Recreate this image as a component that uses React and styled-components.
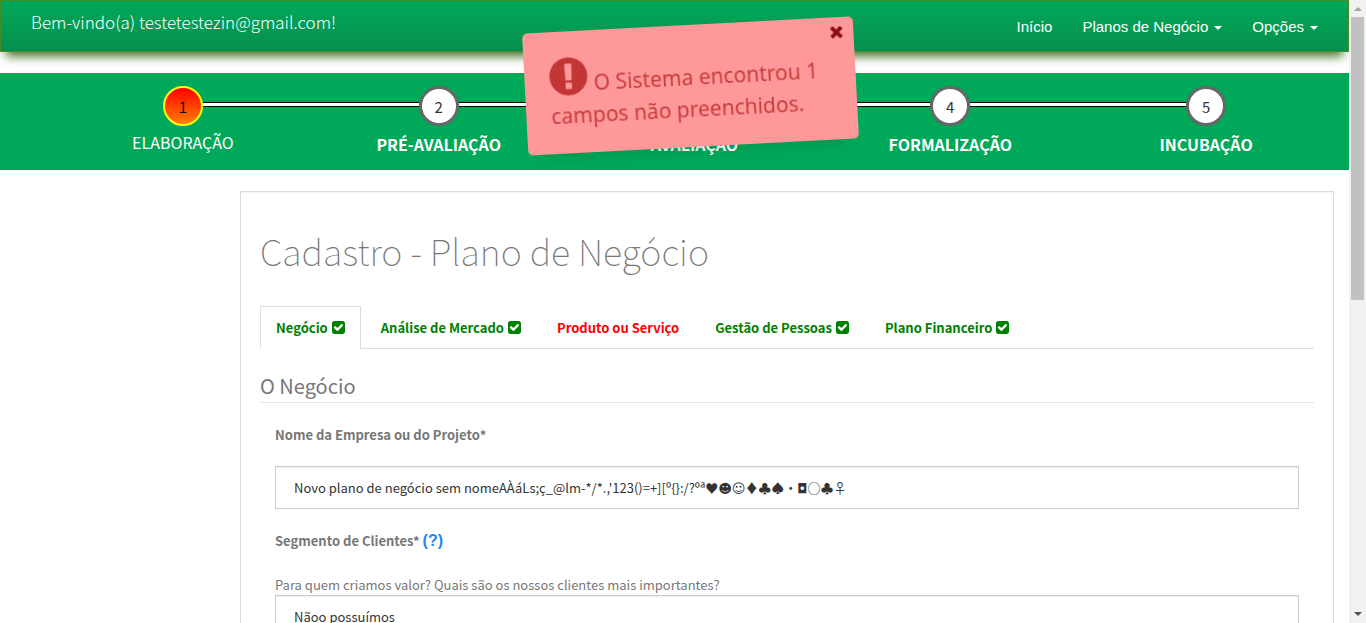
import React from "react";
import styled, { createGlobalStyle, css } from "styled-components";

const sans = `"Noto Sans CJK SC", "DejaVu Sans", sans-serif`;

const GlobalStyle = createGlobalStyle`
  *, *::before, *::after { box-sizing: border-box; }
  body { margin: 0; background: #fff; color: #777; font-family: ${sans}; font-size: 13px; line-height: 21px; }
  h1, h2, p, ol, ul { margin: 0; padding: 0; font-weight: 400; }
  ol, ul { list-style: none; }
  a { color: inherit; text-decoration: none; }
  button, input, textarea { font: inherit; }
`;

const Window = styled.div`
  display: grid;
  grid-template-columns: minmax(0, 1fr) 17px;
  height: 100vh;
  overflow: hidden;
`;

const Page = styled.div`
  min-height: 0;
  overflow: hidden;
`;

const Navbar = styled.header`
  display: flex;
  justify-content: space-between;
  align-items: flex-start;
  height: 52px;
  padding: 0 30px;
  color: #fff;
  background: linear-gradient(#00a859, #068f4f);
  border: 1px solid #4a8a22;
  box-shadow: 0 10px 10px -6px #3b6b1d;
`;

const Welcome = styled.p`
  padding-top: 9px;
  font-size: 17px;
  line-height: 24px;
  font-weight: 300;
`;

const NavLinks = styled.nav`
  display: flex;
  gap: 30px;
  padding-top: 15px;
  font-family: "Liberation Sans", Arial, sans-serif;
  font-size: 15px;
  line-height: 22px;
`;

const NavLink = styled.a`
  display: flex;
  align-items: center;
  gap: 6px;
`;

const Caret = styled.span`
  border: 4px solid transparent;
  border-top-color: #fff;
  border-bottom: 0;
  margin-top: 2px;
`;

const StepBar = styled.ol`
  display: grid;
  grid-template-columns: repeat(5, 1fr);
  height: 97px;
  margin-top: 21px;
  padding: 13px 15px 0 55px;
  background: #00a859;
`;

const StepItem = styled.li`
  display: grid;
  grid-template-columns: 1fr 40px 1fr;
  grid-template-rows: 40px auto;
  align-items: center;
  align-content: start;
  color: #fff;
`;

const Connector = styled.span`
  height: 5px;
  margin-top: -3px;
  ${(p) =>
    p.$drawn &&
    css`
      background: #fff;
      border: solid #000;
      border-width: 1px 0;
    `}
`;

const StepCircle = styled.span`
  display: flex;
  justify-content: center;
  align-items: center;
  height: 40px;
  border-radius: 50%;
  font-size: 15px;
  color: #333;
  background: #fff;
  border: 3px solid #666;
  ${(p) =>
    p.$current &&
    css`
      color: #000;
      background: linear-gradient(#f00, #ff7f00);
      border: 2px solid #ff0;
    `}
`;

const StepLabel = styled.span`
  grid-column: 1 / -1;
  padding-top: ${(p) => (p.$current ? 5 : 7)}px;
  text-align: center;
  font-size: 16px;
  line-height: 22px;
  font-weight: ${(p) => (p.$current ? 400 : 700)};
`;

const Card = styled.main`
  margin: 21px 15px 0 240px;
  padding: 37px 19px;
  min-height: 600px;
  border: 1px solid #ddd;
  box-shadow: inset 0 1px 1px rgba(0, 0, 0, 0.05);
`;

const Title = styled.h1`
  font-size: 36px;
  line-height: 42px;
  font-weight: 100;
`;

const Tabs = styled.ul`
  display: flex;
  gap: 4px;
  margin-top: 35px;
  border-bottom: 1px solid #ddd;
`;

const Tab = styled.a`
  display: flex;
  align-items: center;
  gap: 4px;
  height: 43px;
  margin-bottom: -1px;
  padding: 0 15px;
  font-weight: 700;
  color: ${(p) => (p.$pending ? "#f00" : "#008000")};
  border: 1px solid transparent;
  ${(p) =>
    p.$active &&
    css`
      background: #fff;
      border-color: #ddd #ddd #fff;
    `}
`;

const SectionTitle = styled.h2`
  margin-top: 23px;
  padding-bottom: 2px;
  font-size: 20px;
  line-height: 28px;
  border-bottom: 1px solid #e5e5e5;
`;

const Form = styled.form`
  padding: 0 15px;
`;

const Field = styled.div`
  display: flex;
  flex-direction: column;
`;

const Label = styled.label`
  padding: 21px 0;
  font-weight: 700;
`;

const Hint = styled.p`
  margin-top: 2px;
`;

const Help = styled.a`
  font-family: "Liberation Sans", Arial, sans-serif;
  font-size: 16px;
  color: #1e88f0;
`;

const controlStyle = css`
  width: 100%;
  padding: 10px 18px;
  border: 1px solid #ccc;
  border-radius: 0;
  color: #333;
  background: #fff;
  outline: 0;
  box-shadow: inset 0 1px 1px rgba(0, 0, 0, 0.075);
`;

const TextInput = styled.input`
  ${controlStyle}
  height: 43px;
`;

const TextArea = styled.textarea`
  ${controlStyle}
  height: 120px;
  resize: none;
`;

const Toast = styled.div`
  position: fixed;
  top: 25px;
  left: 50%;
  width: 331px;
  margin-left: -158px;
  padding: 36px 25px 22px;
  transform: rotate(-3deg);
  border-radius: 5px;
  background: #ff9999;
  color: #c83c3c;
  box-shadow: 0 16px 12px -12px rgba(0, 60, 20, 0.15);
  font-family: "Noto Sans", sans-serif;
  font-size: 21px;
  line-height: 32px;
`;

const ToastClose = styled.button`
  position: absolute;
  top: 9px;
  right: 11px;
  display: flex;
  padding: 0;
  border: 0;
  background: none;
  color: #8a1010;
`;

const ToastIcon = styled.svg`
  margin-right: 6px;
  vertical-align: -4px;
  margin-top: -12px;
  color: #c43535;
`;

const ScrollTrack = styled.div`
  display: flex;
  flex-direction: column;
  align-items: center;
  justify-content: space-between;
  padding: 7px 2px;
  background: #f1f1f1;
`;

const ScrollTop = styled.div`
  display: flex;
  flex-direction: column;
  align-items: center;
  gap: 6px;
  width: 100%;
`;

const Arrow = styled.span`
  border: 4px solid transparent;
  ${(p) =>
    p.$up
      ? "border-bottom-color: #a3a3a3; border-top: 0;"
      : "border-top-color: #505050; border-bottom: 0;"}
`;

const Thumb = styled.span`
  width: 13px;
  height: 283px;
  background: #c1c1c1;
`;

const CheckIcon = () => (
  <svg width="13" height="13" viewBox="128 128 1536 1536" fill="currentColor" aria-hidden="true">
    <path d="M813 1299l614-614q19-19 19-45t-19-45l-102-102q-19-19-45-19t-45 19l-467 467-211-211q-19-19-45-19t-45 19l-102 102q-19 19-19 45t19 45l358 358q19 19 45 19t45-19zm851-883v960q0 119-84.5 203.5t-203.5 84.5h-960q-119 0-203.5-84.5t-84.5-203.5v-960q0-119 84.5-203.5t203.5-84.5h960q119 0 203.5 84.5t84.5 203.5z" />
  </svg>
);

const steps = ["ELABORAÇÃO", "PRÉ-AVALIAÇÃO", "AVALIAÇÃO", "FORMALIZAÇÃO", "INCUBAÇÃO"];

const tabs = [
  { name: "Negócio", done: true },
  { name: "Análise de Mercado", done: true },
  { name: "Produto ou Serviço", done: false },
  { name: "Gestão de Pessoas", done: true },
  { name: "Plano Financeiro", done: true },
];

export default function App() {
  return (
    <>
      <GlobalStyle />
      <Window>
        <Page>
          <Navbar>
            <Welcome>Bem-vindo(a) testetestezin@gmail.com!</Welcome>
            <NavLinks>
              <NavLink href="#inicio">Início</NavLink>
              <NavLink href="#planos">Planos de Negócio<Caret /></NavLink>
              <NavLink href="#opcoes">Opções<Caret /></NavLink>
            </NavLinks>
          </Navbar>
          <StepBar>
            {steps.map((name, i) => (
              <StepItem key={name}>
                <Connector $drawn={i > 0} />
                <StepCircle $current={i === 0}>{i + 1}</StepCircle>
                <Connector $drawn={i < steps.length - 1} />
                <StepLabel $current={i === 0}>{name}</StepLabel>
              </StepItem>
            ))}
          </StepBar>
          <Card>
            <Title>Cadastro - Plano de Negócio</Title>
            <Tabs>
              {tabs.map((tab, i) => (
                <li key={tab.name}>
                  <Tab href={`#aba-${i + 1}`} $active={i === 0} $pending={!tab.done}>
                    {tab.name}
                    {tab.done && <CheckIcon />}
                  </Tab>
                </li>
              ))}
            </Tabs>
            <SectionTitle>O Negócio</SectionTitle>
            <Form>
              <Field>
                <Label htmlFor="nome">Nome da Empresa ou do Projeto*</Label>
                <TextInput id="nome" defaultValue="Novo plano de negócio sem nomeAÀáLs;ç_@lm-*/*.,'123()=+][º{}:/?ºª♥☻☺♦♣♠•◘○♣♀" />
              </Field>
              <Field>
                <Label htmlFor="segmento">
                  Segmento de Clientes* <Help href="#ajuda">(?)</Help>
                </Label>
                <Hint>Para quem criamos valor? Quais são os nossos clientes mais importantes?</Hint>
                <TextArea id="segmento" defaultValue="Nãoo possuímos" />
              </Field>
            </Form>
          </Card>
        </Page>
        <ScrollTrack aria-hidden="true">
          <ScrollTop>
            <Arrow $up />
            <Thumb />
          </ScrollTop>
          <Arrow />
        </ScrollTrack>
      </Window>
      <Toast role="alert">
        <ToastClose type="button" aria-label="Fechar">
          <svg width="12" height="12" viewBox="302 366 1188 1188" fill="currentColor">
            <path d="M1490 1322q0 40-28 68l-136 136q-28 28-68 28t-68-28l-294-294-294 294q-28 28-68 28t-68-28l-136-136q-28-28-28-68t28-68l294-294-294-294q-28-28-28-68t28-68l136-136q28-28 68-28t68 28l294 294 294-294q28-28 68-28t68 28l136 136q28 28 28 68t-28 68l-294 294 294 294q28 28 28 68z" />
          </svg>
        </ToastClose>
        <ToastIcon width="38" height="38" viewBox="0 0 1536 1536" fill="currentColor" aria-hidden="true">
          <path d="M768 0q209 0 385.5 103t279.5 279.5 103 385.5-103 385.5-279.5 279.5-385.5 103-385.5-103-279.5-279.5-103-385.5 103-385.5 279.5-279.5 385.5-103zm128 1247v-190q0-14-9-23.5t-22-9.5h-192q-13 0-23 10t-10 23v190q0 13 10 23t23 10h192q13 0 22-9.5t9-23.5zm-2-344l18-621q0-12-10-18-10-8-24-8h-220q-14 0-24 8-10 6-10 18l17 621q0 10 10 17.5t24 7.5h185q14 0 23.5-7.5t10.5-17.5z" />
        </ToastIcon>
        O Sistema encontrou 1 campos não preenchidos.
      </Toast>
    </>
  );
}
